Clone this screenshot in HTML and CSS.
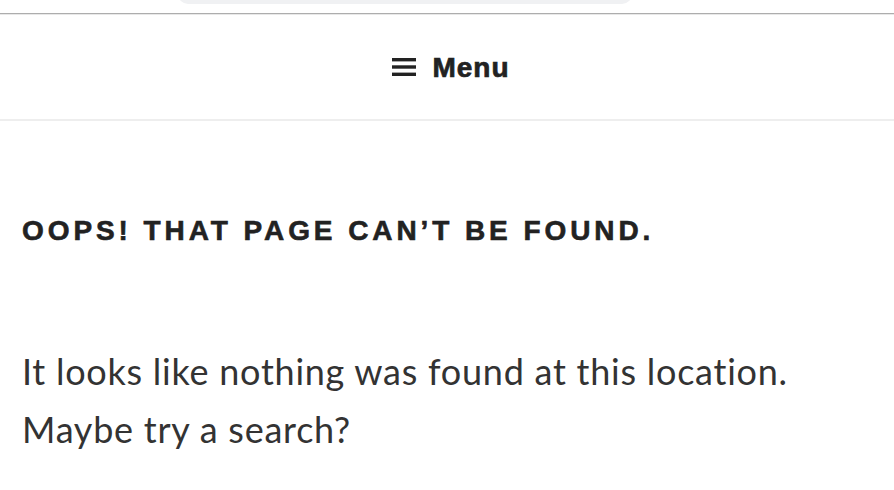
FILE: index.html
```html
<!DOCTYPE html>
<html lang="en">
<head>
<meta charset="utf-8">
<title>Page not found</title>
<link rel="stylesheet" href="styles.css">
</head>
<body>
<div class="topbar">
  <div class="search-bar"></div>
</div>
<nav class="nav">
  <button class="menu-toggle" type="button">
    <svg class="burger" width="24" height="20" viewBox="0 0 24 20" aria-hidden="true">
      <rect x="0" y="1" width="24" height="3.4"/>
      <rect x="0" y="8.3" width="24" height="3.4"/>
      <rect x="0" y="15.6" width="24" height="3.4"/>
    </svg>
    <span class="menu-label">Menu</span>
  </button>
</nav>
<main class="content">
  <h1 class="page-title">Oops! That page can’t be found.</h1>
  <p class="lead">It looks like nothing was found at this location. Maybe try a search?</p>
</main>
</body>
</html>
```
FILE: styles.css
```css
* { box-sizing: border-box; }
html, body { margin: 0; padding: 0; background: #fff; }
body { font-family: "Liberation Sans", Arial, sans-serif; color: #222; }

.topbar {
  height: 14px;
  overflow: hidden;
  display: flex;
  align-items: flex-end;
  padding-bottom: 9px;
  border-bottom: 1px solid #adadad;
}
.search-bar {
  flex: none;
  width: 454px;
  height: 40px;
  margin-left: 178px;
  background: #f0f1f3;
  border-radius: 10px;
}

.nav {
  height: 107px;
  border-top: 1px solid #e8e8e8;
  border-bottom: 2px solid #eee;
  display: flex;
  align-items: center;
  justify-content: center;
}
.menu-toggle {
  display: flex;
  align-items: center;
  gap: 16px;
  background: none;
  border: 0;
  padding: 0;
  margin-left: 8px;
  color: #222;
  font-family: "Liberation Sans", Arial, sans-serif;
  font-weight: 700;
  font-size: 28px;
  cursor: pointer;
}
.burger { fill: #222; display: block; }
.menu-label {
  letter-spacing: 1px;
  -webkit-text-stroke: 0.7px #222;
  position: relative;
  top: 1px;
}

.content { padding: 0 22px; }
.page-title {
  margin: 93px 0 0;
  font-size: 28px;
  font-weight: 700;
  letter-spacing: 0.14em;
  text-transform: uppercase;
  line-height: 1.2;
  color: #222;
  -webkit-text-stroke: 0.6px #222;
}
.lead {
  margin: 94px 0 0;
  font-family: Lato, "Liberation Sans", sans-serif;
  font-size: 36px;
  line-height: 58px;
  letter-spacing: 0.75px;
  font-variant-ligatures: none;
  color: #333;
  max-width: 830px;
}
```
